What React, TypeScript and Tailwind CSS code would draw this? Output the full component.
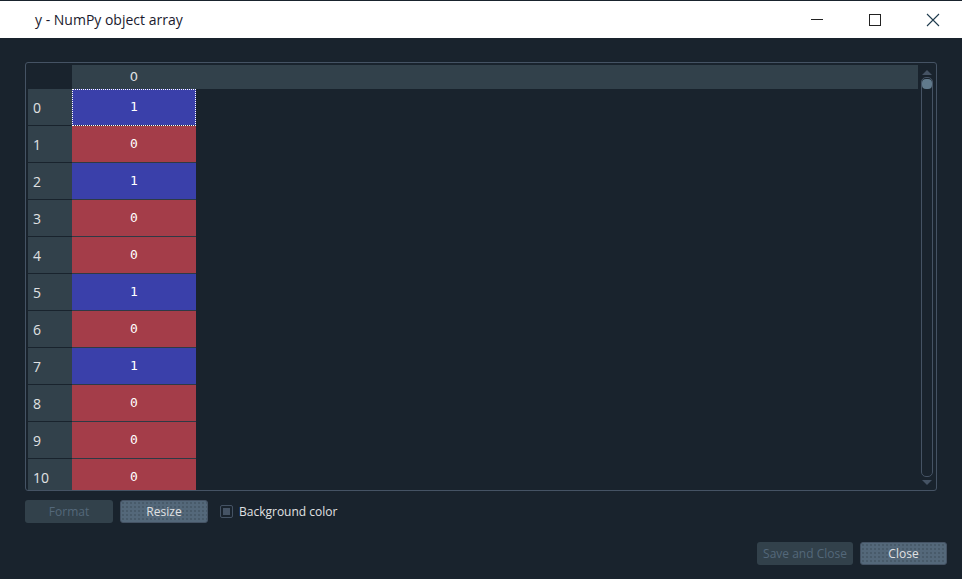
import React from "react";

const values = [1, 0, 1, 0, 0, 1, 0, 1, 0, 0, 0];

const TitleBar = () => {
  return (
    <div className="h-[38px] bg-white border-t border-[#19232d] flex items-center justify-between">
      <span className="pl-[35px] text-[14px] text-[#1a1a2e] font-['Open_Sans',sans-serif]">
        y - NumPy object array
      </span>
      <div className="flex h-full items-center">
        <div className="w-[58px] h-full flex items-center justify-center">
          <div className="w-[12px] h-px bg-[#222]" />
        </div>
        <div className="w-[58px] h-full flex items-center justify-center">
          <div className="w-[12px] h-[12px] border border-[#222]" />
        </div>
        <div className="w-[58px] h-full flex items-center justify-center">
          <svg width="14" height="14" viewBox="0 0 14 14">
            <path d="M1 1 L13 13 M13 1 L1 13" stroke="#1f3b4d" strokeWidth="1.1" />
          </svg>
        </div>
      </div>
    </div>
  );
};

const Table = () => {
  return (
    <div className="h-[429px] border border-[#455364] rounded-[3px] pt-[2px] pl-[2px] flex overflow-hidden">
      <div className="flex-1 flex flex-col overflow-hidden">
        <div className="flex h-[24px] shrink-0">
          <div className="w-[44px] bg-[#19232d]" />
          <div className="flex-1 bg-[#32414b] flex">
            <div className="w-[124px] flex items-center justify-center text-[13px] text-[#e0e1e3] font-['DejaVu_Sans',sans-serif]">
              0
            </div>
          </div>
        </div>
        {values.map((v, i) => (
          <div key={i} className="flex h-[37px] shrink-0">
            <div className="w-[44px] bg-[#32414b] border-b border-[#19232d] flex items-center pl-[5px] text-[14px] text-[#e0e1e3] font-['Open_Sans',sans-serif]">
              {i}
            </div>
            <div
              className={
                (v === 1 ? "bg-[#3a40aa] " : "bg-[#a43d49] ") +
                "w-[124px] border-b border-[#2e3a45] flex items-center justify-center text-[13px] text-white font-['DejaVu_Sans_Mono',monospace] " +
                (i === 0 ? "outline outline-1 outline-dotted outline-white -outline-offset-1" : "")
              }
            >
              {v}
            </div>
          </div>
        ))}
      </div>
      <div className="w-[18px] shrink-0 flex flex-col items-center pt-[5px] pb-[5px]">
        <div className="w-0 h-0 border-l-[5px] border-r-[5px] border-b-[5px] border-l-transparent border-r-transparent border-b-[#455364]" />
        <div className="flex-1 w-[12px] border border-[#455364] rounded-[5px] mt-[2px] mb-[3px] flex justify-center pt-[1px]">
          <div className="w-[10px] h-[10px] rounded-[4px] bg-[#60798b]" />
        </div>
        <div className="w-0 h-0 border-l-[5px] border-r-[5px] border-t-[5px] border-l-transparent border-r-transparent border-t-[#455364]" />
      </div>
    </div>
  );
};

export default function App() {
  return (
    <div className="w-[962px] h-[579px] bg-[#19232d] overflow-hidden font-['Open_Sans',sans-serif]">
      <TitleBar />
      <div className="pt-[24px] pl-[25px] pr-[25px]">
        <Table />
        <div className="flex items-center mt-[9px] gap-[7px]">
          <button className="w-[88px] h-[23px] rounded-[3px] bg-[#32414b] text-[12px] text-[#54687a]">
            Format
          </button>
          <button className="w-[88px] h-[23px] rounded-[3px] border border-[#455364] bg-[#54687a] bg-[radial-gradient(#3b4a56_0.6px,transparent_0.8px)] bg-[size:4px_4px] text-[12px] text-[#e0e1e3]">
            Resize
          </button>
          <div className="flex items-center ml-[5px] gap-[6px]">
            <div className="w-[13px] h-[13px] border border-[#455364] rounded-[2px] flex items-center justify-center">
              <div className="w-[7px] h-[7px] bg-[#455364]" />
            </div>
            <span className="text-[12px] text-[#e0e1e3]">Background color</span>
          </div>
        </div>
        <div className="flex justify-end mt-[19px] gap-[7px] -mr-[10px]">
          <button className="w-[96px] h-[23px] rounded-[3px] bg-[#32414b] text-[12px] text-[#54687a]">
            Save and Close
          </button>
          <button className="w-[87px] h-[23px] rounded-[3px] border border-[#455364] bg-[#54687a] bg-[radial-gradient(#3b4a56_0.6px,transparent_0.8px)] bg-[size:4px_4px] text-[12px] text-[#e0e1e3]">
            Close
          </button>
        </div>
      </div>
    </div>
  );
}
